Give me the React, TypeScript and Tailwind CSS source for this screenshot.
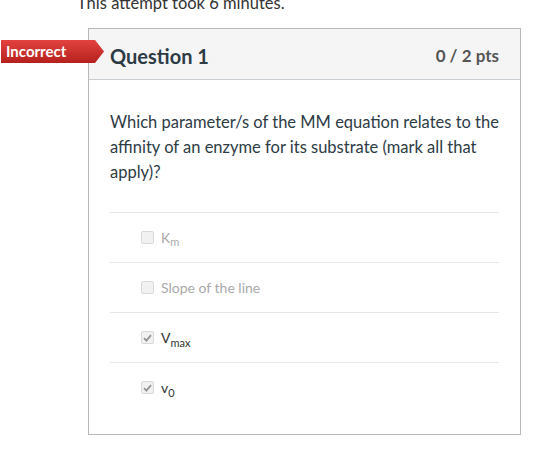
import React from "react";

const lato = { fontFamily: "Lato, 'Open Sans', sans-serif" };

type Answer = {
  label: React.ReactNode;
  checked: boolean;
};

const answers: Answer[] = [
  {
    label: (
      <>
        K<sub className="relative top-[3px] align-baseline text-[11px]">m</sub>
      </>
    ),
    checked: false,
  },
  { label: "Slope of the line", checked: false },
  {
    label: (
      <>
        V<sub className="relative top-[4px] align-baseline text-[11px]">max</sub>
      </>
    ),
    checked: true,
  },
  {
    label: (
      <>
        v<sub className="relative top-[4px] align-baseline text-[11px]">0</sub>
      </>
    ),
    checked: true,
  },
];

const CheckBox = ({ checked }: { checked: boolean }) => (
  <span className="flex h-[13px] w-[13px] items-center justify-center rounded-[2px] border border-[#d9d9d9] bg-[#f1f1f1]">
    {checked && (
      <svg width="9" height="8" viewBox="0 0 9 8">
        <path
          d="M1 4.2 L3.4 6.6 L8 1.2"
          fill="none"
          stroke="#939393"
          strokeWidth="1.8"
        />
      </svg>
    )}
  </span>
);

const IncorrectFlag = () => (
  <div className="absolute left-[-88px] top-[11px] flex h-[23px] items-stretch">
    <div className="flex items-center bg-gradient-to-b from-[#e3423f] to-[#b5201d] pl-[5px] pr-[29px] text-[15px] font-bold text-white">
      Incorrect
    </div>
    <svg width="9" height="23" viewBox="0 0 9 23" className="block">
      <defs>
        <linearGradient id="flagTip" x1="0" y1="0" x2="0" y2="1">
          <stop offset="0" stopColor="#e3423f" />
          <stop offset="1" stopColor="#b5201d" />
        </linearGradient>
      </defs>
      <path d="M0 0 L9 11.5 L0 23 Z" fill="url(#flagTip)" />
    </svg>
  </div>
);

export default function App() {
  return (
    <div className="h-[450px] w-[560px] overflow-hidden bg-white" style={lato}>
      <p className="ml-[77px] mt-[-9px] text-[16.5px] leading-[24px] text-[#333]">
        This attempt took 6 minutes.
      </p>

      <div className="relative ml-[88px] mt-[13px] w-[433px] border border-[#b8b8b8]">
        <IncorrectFlag />

        <div className="flex h-[51px] items-center justify-between border-b border-[#c7cdd1] bg-[#f5f5f5] pl-[21px] pr-[21px] pt-[3px]">
          <h2 className="text-[20px] font-bold text-[#2d3b45]">Question 1</h2>
          <span className="text-[17px] font-bold text-[#555]">0 / 2 pts</span>
        </div>

        <div className="px-[21px] pb-[22px] pt-[30px]">
          <p className="mr-[-6px] pb-[27px] text-[16.5px] leading-[25px] text-[#2d3b45]">
            Which parameter/s of the MM equation relates to the affinity of an
            enzyme for its substrate (mark all that apply)?
          </p>

          {answers.map((a, i) => (
            <div
              key={i}
              className="flex h-[50px] items-center gap-[7px] border-t border-[#e6e6e6] pl-[31px] text-[14px]"
            >
              <CheckBox checked={a.checked} />
              <span className={a.checked ? "text-[#333]" : "text-[#a9a9a9]"}>
                {a.label}
              </span>
            </div>
          ))}
        </div>
      </div>
    </div>
  );
}
